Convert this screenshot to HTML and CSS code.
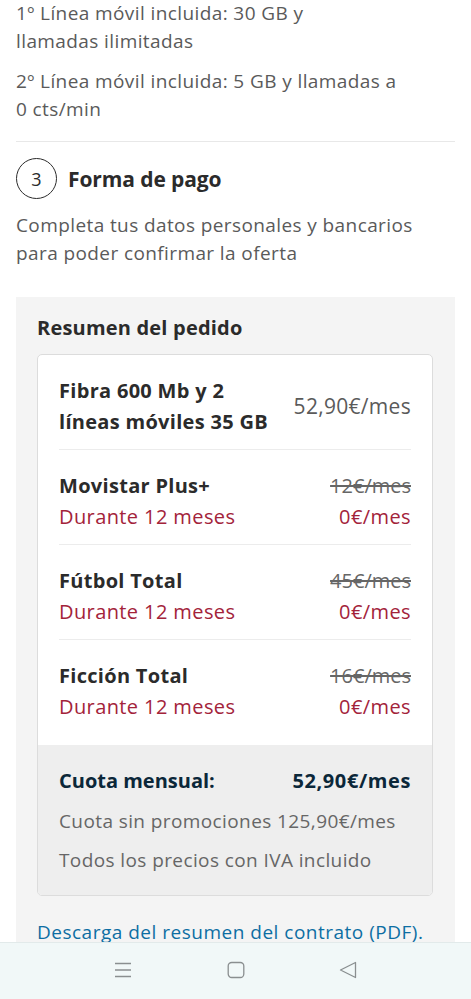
FILE: index.html
```html
<!DOCTYPE html>
<html lang="es">
<head>
<meta charset="utf-8">
<title>Resumen del pedido</title>
<link rel="stylesheet" href="styles.css">
</head>
<body>
<main class="page">
  <section class="intro">
    <p>1º Línea móvil incluida: 30 GB y<br>llamadas ilimitadas</p>
    <p>2º Línea móvil incluida: 5 GB y llamadas a<br>0 cts/min</p>
  </section>
  <hr class="divider">
  <div class="step">
    <span class="step-num">3</span>
    <h2 class="step-title">Forma de pago</h2>
  </div>
  <p class="step-desc">Completa tus datos personales y bancarios<br>para poder confirmar la oferta</p>

  <section class="summary">
    <h3 class="summary-title">Resumen del pedido</h3>
    <div class="card">
      <div class="row">
        <div class="row-name">Fibra 600 Mb y 2<br>líneas móviles 35 GB</div>
        <div class="row-price">52,90€/mes</div>
      </div>
      <div class="row">
        <div class="row-left">
          <div class="row-name">Movistar Plus+</div>
          <div class="promo">Durante 12 meses</div>
        </div>
        <div class="row-right">
          <div class="old">12€/mes</div>
          <div class="promo">0€/mes</div>
        </div>
      </div>
      <div class="row">
        <div class="row-left">
          <div class="row-name">Fútbol Total</div>
          <div class="promo">Durante 12 meses</div>
        </div>
        <div class="row-right">
          <div class="old">45€/mes</div>
          <div class="promo">0€/mes</div>
        </div>
      </div>
      <div class="row row-last">
        <div class="row-left">
          <div class="row-name">Ficción Total</div>
          <div class="promo">Durante 12 meses</div>
        </div>
        <div class="row-right">
          <div class="old">16€/mes</div>
          <div class="promo">0€/mes</div>
        </div>
      </div>
      <div class="totals">
        <div class="total-line">
          <span>Cuota mensual:</span>
          <span class="total-amount">52,90€/mes</span>
        </div>
        <div class="note">Cuota sin promociones 125,90€/mes</div>
        <div class="note">Todos los precios con IVA incluido</div>
      </div>
    </div>
    <a class="pdf-link" href="#">Descarga del resumen del contrato (PDF).</a>
  </section>
</main>

<nav class="navbar">
  <span class="nav-slot">
    <svg width="18" height="18" viewBox="0 0 18 18" fill="none" stroke="#8a8f90" stroke-width="1.3">
      <path d="M1 2.5h16M1 9h16M1 15.5h16"/>
    </svg>
  </span>
  <span class="nav-slot">
    <svg width="18" height="18" viewBox="0 0 18 18" fill="none" stroke="#8a8f90" stroke-width="1.3">
      <rect x="1.2" y="1.5" width="15.6" height="15" rx="3.5"/>
    </svg>
  </span>
  <span class="nav-slot">
    <svg width="18" height="18" viewBox="0 0 18 18" fill="none" stroke="#8a8f90" stroke-width="1.3" stroke-linejoin="round">
      <path d="M16.5 1.5v15L1.5 9z"/>
    </svg>
  </span>
</nav>
</body>
</html>
```

FILE: styles.css
```css
* { box-sizing: border-box; }

body {
  margin: 0;
  background: #ffffff;
  font-family: "Open Sans", Lato, "Liberation Sans", sans-serif;
  color: #5a5a5a;
  letter-spacing: 0.4px;
  -webkit-font-smoothing: antialiased;
}

.page {
  padding: 0 16px 80px;
  margin-top: -1px;
}

.intro p {
  margin: 0 0 12px;
  font-size: 19px;
  line-height: 28px;
  color: #5a5a5a;
}
.intro p:last-child { margin-bottom: 0; }

.divider {
  border: 0;
  border-top: 1px solid #e8e8e8;
  margin: 18px 0 0;
}

.step {
  display: flex;
  align-items: center;
  gap: 11px;
  margin-top: 16px;
}

.step-num {
  width: 41px;
  height: 41px;
  border: 1.5px solid #2b2b2b;
  border-radius: 50%;
  display: flex;
  align-items: center;
  justify-content: center;
  font-size: 18px;
  letter-spacing: 0;
  color: #2b2b2b;
  flex: none;
}

.step-title {
  margin: 0;
  font-size: 21px;
  font-weight: 700;
  letter-spacing: -0.1px;
  color: #2b2b2b;
}

.step-desc {
  margin: 12px 0 0;
  font-size: 19px;
  line-height: 28px;
  color: #5a5a5a;
}

.summary {
  margin-top: 30px;
  background: #f4f4f4;
  padding: 17px 22px 10px 21px;
}

.summary-title {
  margin: 0;
  font-size: 20px;
  line-height: 28px;
  font-weight: 700;
  letter-spacing: 0.2px;
  color: #2b2b2b;
}

.card {
  margin-top: 12px;
  background: #ffffff;
  border: 1px solid #dcdcdc;
  border-radius: 5px;
  overflow: hidden;
}

.row {
  margin: 0 21px;
  padding: 20px 0 12px;
  border-bottom: 1px solid #ececec;
  display: flex;
  justify-content: space-between;
  align-items: center;
  font-size: 20px;
  line-height: 31px;
}

.row-last {
  border-bottom: 0;
  padding-bottom: 23px;
}

.row-name {
  font-weight: 700;
  letter-spacing: 0.3px;
  color: #2b2b2b;
}

.row-price {
  font-size: 21px;
  letter-spacing: 0.3px;
  color: #5a5a5a;
}

.row-right { text-align: right; }

.old {
  color: #666666;
  letter-spacing: 0;
  text-decoration: line-through;
}

.promo {
  color: #a3233a;
}

.totals {
  background: #eeeeee;
  padding: 20px 21px 21px;
}

.total-line {
  display: flex;
  justify-content: space-between;
  font-size: 20px;
  line-height: 31px;
  font-weight: 700;
  letter-spacing: 0;
  color: #0b2739;
}

.total-amount {
  letter-spacing: 0.6px;
}

.note {
  margin-top: 11px;
  font-size: 19px;
  line-height: 28px;
  color: #666666;
}

.pdf-link {
  display: block;
  margin-top: 22px;
  font-size: 19px;
  line-height: 28px;
  letter-spacing: 0.5px;
  color: #0d6ea3;
  text-decoration: none;
}

.navbar {
  position: fixed;
  left: 0;
  right: 0;
  bottom: 0;
  height: 57px;
  background: #f1f8f8;
  border-top: 1px solid #e2eaea;
  display: flex;
  justify-content: center;
  align-items: center;
  padding-bottom: 2px;
}

.nav-slot {
  width: 112.5px;
  display: flex;
  justify-content: center;
}
.nav-slot svg { display: block; }
```
